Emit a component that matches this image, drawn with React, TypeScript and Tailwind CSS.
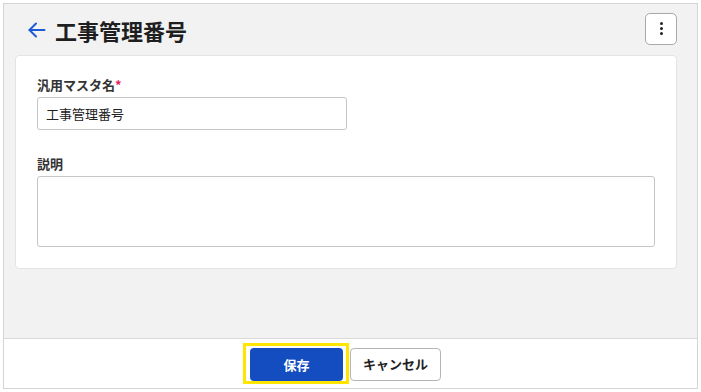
import { useState } from "react";

export default function App() {
    const [name, setName] = useState("工事管理番号");
    const [desc, setDesc] = useState("");

    return (
        <div className="w-[701px] h-[392px] bg-white pt-[3px] pl-[3px] font-['Noto_Sans_CJK_JP','Noto_Sans',sans-serif]">
            <div className="w-[695px] h-[386px] border border-[#d4d4d4] flex flex-col">
                {/* main */}
                <div className="flex-1 bg-[#f2f2f2] pl-[11px] pr-[20px]">
                    <div className="h-[51px] flex items-center justify-between">
                        <div className="flex items-center pl-[13px]">
                            <svg width="18" height="18" viewBox="0 0 18 18" fill="none" stroke="#1d5bd6" strokeWidth="2" strokeLinecap="round" strokeLinejoin="round">
                                <path d="M16.5 9H1.5" />
                                <path d="M8 2.5L1.5 9 8 15.5" />
                            </svg>
                            <h1 className="ml-[9px] text-[22px] font-bold text-[#1f1f1f] leading-none">工事管理番号</h1>
                        </div>
                        <button className="w-[32px] h-[32px] mt-[-2px] rounded-[5px] border border-[#a9a9a9] bg-white flex flex-col items-center justify-center gap-[2px]">
                            <span className="w-[3px] h-[3px] rounded-full bg-[#222]" />
                            <span className="w-[3px] h-[3px] rounded-full bg-[#222]" />
                            <span className="w-[3px] h-[3px] rounded-full bg-[#222]" />
                        </button>
                    </div>

                    <div className="bg-white rounded-[4px] border border-[#e4e4e4] px-[21px] pt-[21px] pb-[21px]">
                        <label className="block text-[13px] font-bold text-[#333] leading-[16px]">
                            汎用マスタ名<span className="text-[#e0245e]">*</span>
                        </label>
                        <input
                            className="mt-[4px] w-[310px] h-[33px] border border-[#c6c6c6] rounded-[3px] px-[8px] text-[13px] text-[#222] outline-none"
                            value={name}
                            onChange={e => setName(e.target.value)}
                        />
                        <label className="block mt-[26px] text-[13px] font-bold text-[#333] leading-[16px]">説明</label>
                        <textarea
                            className="mt-[4px] block w-[618px] h-[71px] border border-[#c6c6c6] rounded-[3px] px-[8px] py-[6px] text-[13px] resize-none outline-none"
                            value={desc}
                            onChange={e => setDesc(e.target.value)}
                        />
                    </div>
                </div>

                {/* footer */}
                <div className="h-[50px] border-t border-[#d9d9d9] bg-white flex items-center pl-[239px] gap-[1px]">
                    <div className="border-[3px] border-[#ffe500] pt-[2px] pb-[0px] pl-[4px] pr-[3px]">
                        <button className="w-[93px] h-[33px] rounded-[4px] bg-[#144dbf] text-white text-[13px] font-bold">保存</button>
                    </div>
                    <button className="w-[91px] h-[33px] mt-[1px] rounded-[4px] border border-[#b5b5b5] bg-white text-[13px] font-bold text-[#222]">キャンセル</button>
                </div>
            </div>
        </div>
    );
}
